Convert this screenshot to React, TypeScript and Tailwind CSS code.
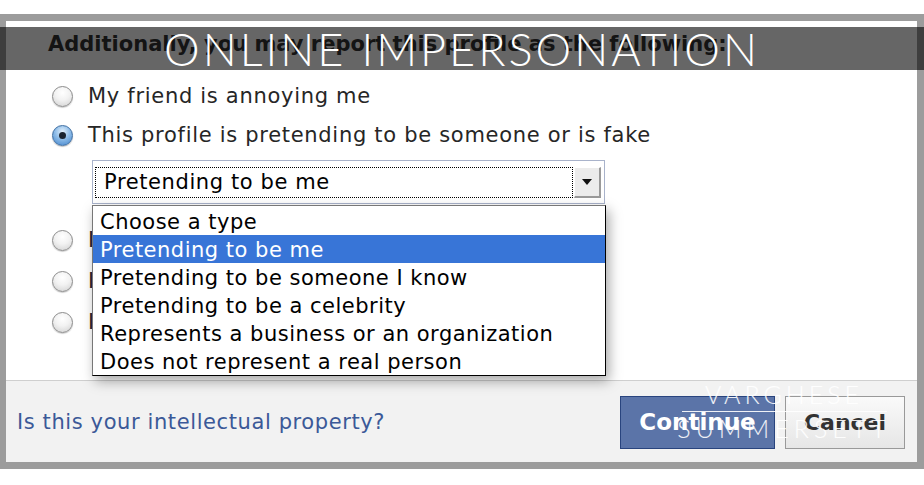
import React from "react";

const options = [
  "Choose a type",
  "Pretending to be me",
  "Pretending to be someone I know",
  "Pretending to be a celebrity",
  "Represents a business or an organization",
  "Does not represent a real person",
];

const Radio = ({ checked = false }: { checked?: boolean }) =>
  checked ? (
    <span className="flex items-center justify-center w-[21px] h-[21px] rounded-full border border-[#3f6fa3] bg-[radial-gradient(circle_at_50%_30%,#e4f1fc_0%,#8fbde8_45%,#3f82cc_100%)] shadow-[0_1px_1px_rgba(0,0,0,0.25)]">
      <span className="w-[7px] h-[7px] rounded-full bg-[#1b2430]" />
    </span>
  ) : (
    <span className="w-[21px] h-[21px] rounded-full border border-[#8c8c8c] bg-[radial-gradient(circle_at_50%_30%,#ffffff_0%,#f2f2f2_45%,#cfcfcf_100%)] shadow-[0_1px_1px_rgba(0,0,0,0.2)]" />
  );

const RadioRow = ({
  label,
  checked,
  className,
}: {
  label: string;
  checked?: boolean;
  className: string;
}) => (
  <div className={`flex items-center gap-[15px] h-[28px] ml-[4px] ${className}`}>
    <Radio checked={checked} />
    <span className="pt-[2px] text-[21px] tracking-[0.7px] text-[#262626] whitespace-nowrap">
      {label}
    </span>
  </div>
);

const SelectBox = () => (
  <div className="relative ml-[44px] mt-[11px] w-[513px]">
    <div className="flex items-center gap-[1px] h-[44px] border border-[#a9b3cb] bg-white pl-[2px] pr-[3px]">
      <div className="flex items-center flex-1 h-[31px] border border-dotted border-black pl-[8px] pt-[2px] text-[21px] tracking-[0.6px] text-black">
        Pretending to be me
      </div>
      <div className="flex items-center justify-center w-[27px] h-[31px] bg-[#ececec] border-t border-l border-t-white border-l-white border-r-2 border-b-2 border-r-[#9a9a9a] border-b-[#9a9a9a]">
        <svg width="10" height="6" viewBox="0 0 10 6">
          <path d="M0 0 L10 0 L5 6 Z" fill="#111" />
        </svg>
      </div>
    </div>
    <div className="absolute left-0 top-[45px] z-10 w-[514px] bg-white border border-[#777] border-r-black border-b-black pt-[1px] shadow-[3px_5px_12px_rgba(0,0,0,0.35)]">
      {options.map((o, i) => (
        <div
          key={o}
          className={`h-[28px] leading-[28px] pl-[7px] pt-[1px] text-[21px] tracking-[0.5px] whitespace-nowrap ${
            i === 1 ? "bg-[#3875d7] text-white" : "text-black"
          }`}
        >
          {o}
        </div>
      ))}
    </div>
  </div>
);

export default function App() {
  return (
    <div className="relative w-[924px] h-[485px] overflow-hidden bg-white font-['DejaVu_Sans',sans-serif]">
      <div className="mt-[14px] border-[#9c9c9c] border-t-[7px] border-l-[6px] border-r-[7px] border-b-[7px]">
        <div className="h-[359px] bg-white pl-[42px] pt-[11px]">
          <div className="h-[24px] leading-[24px] text-[21px] font-bold text-[#333] whitespace-nowrap">
            Additionally, you may report this profile as the following:
          </div>
          <RadioRow className="mt-[26px]" label="My friend is annoying me" />
          <RadioRow
            className="mt-[11px]"
            checked
            label="This profile is pretending to be someone or is fake"
          />
          <SelectBox />
          <RadioRow className="mt-[22px]" label="Inappropriate profile photo" />
          <RadioRow className="mt-[13px]" label="It's harassing me" />
          <RadioRow className="mt-[13px]" label="It's spam" />
        </div>
        <div className="flex items-center justify-between h-[82px] border-t border-[#cfcfcf] bg-[#f2f2f2] pl-[11px] pr-[12px]">
          <a className="pt-[3px] text-[21px] tracking-[0.6px] text-[#3b5998]">
            Is this your intellectual property?
          </a>
          <div className="flex gap-[10px] pt-[2px]">
            <button className="w-[155px] h-[53px] border border-[#29447e] bg-[#5b74a8] text-[23px] font-bold text-white">
              Continue
            </button>
            <button className="w-[120px] h-[53px] border border-[#999] bg-[linear-gradient(#fafafa,#e6e6e6)] text-[22px] font-bold text-[#333]">
              Cancel
            </button>
          </div>
        </div>
      </div>

      <div className="absolute left-0 top-[27px] z-20 flex h-[43px] w-full items-center justify-center bg-black/60 pt-[2px]">
        <span className="font-['Lato',sans-serif] font-light text-[45px] leading-none tracking-[3px] text-white whitespace-nowrap">
          ONLINE IMPERSONATION
        </span>
      </div>

      <div className="absolute left-[634px] top-[382px] z-30 flex w-[300px] flex-col items-center font-['Lato',sans-serif] font-light text-white/90 leading-none">
        <span className="text-[25px] tracking-[4px]">VARGHESE</span>
        <span className="my-[4px] h-px w-[205px] bg-white/90" />
        <span className="text-[25px] tracking-[5px]">SUMMERSETT</span>
      </div>
    </div>
  );
}
